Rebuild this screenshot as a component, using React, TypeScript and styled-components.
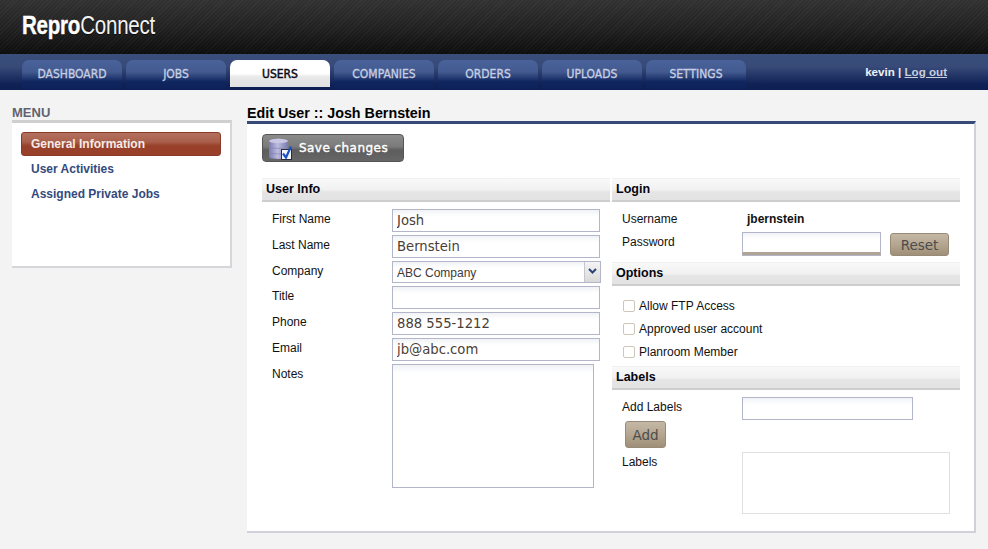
import React from "react";
import styled, { createGlobalStyle } from "styled-components";

const Global = createGlobalStyle`
  html, body { margin: 0; padding: 0; background: #f3f3f3; }
  body { font-family: "Liberation Sans", Arial, sans-serif; font-size: 12px; color: #111; overflow: hidden; }
  * { box-sizing: border-box; }
`;

const Page = styled.div`
  width: 988px;
  height: 549px;
  display: flex;
  flex-direction: column;
  overflow: hidden;
`;

const Header = styled.header`
  height: 54px;
  flex: none;
  padding: 11px 0 0 22px;
  background:
    repeating-linear-gradient(135deg, rgba(255,255,255,0.03) 0 1px, transparent 1px 3px),
    linear-gradient(#323232 0%, #222222 50%, #0d0d0d 100%);
`;

const Logo = styled.div`
  color: #fff;
  font-family: "Liberation Sans", Arial, sans-serif;
  font-size: 26px;
  line-height: 28px;
  letter-spacing: -0.3px;
  transform-origin: left center;
  transform: scaleX(0.79);
  text-shadow: 0 1px 1px rgba(0,0,0,0.6);
  b { font-weight: 700; -webkit-text-stroke: 0.4px #fff; }
  span { font-weight: 400; color: #f2f2f2; }
`;

const NavBar = styled.nav`
  height: 36px;
  flex: none;
  padding: 6px 41px 0 22px;
  display: flex;
  align-items: flex-start;
  gap: 4px;
  background: linear-gradient(#3a4e7c 0%, #374a78 35%, #0f2155 85%, #0e1f52 100%);
`;

const Tab = styled.a<{ $active?: boolean }>`
  width: 100px;
  height: ${(p) => (p.$active ? "27px" : "30px")};
  padding-top: 1px;
  display: block;
  text-align: center;
  border-radius: 7px 7px 0 0;
  font-family: "DejaVu Sans Condensed", "DejaVu Sans", sans-serif;
  font-size: 12px;
  line-height: 26px;
  font-weight: 400;
  color: ${(p) => (p.$active ? "#0a0a14" : "#c7cfe2")};
  -webkit-text-stroke: ${(p) => (p.$active ? "0.45px #0a0a14" : "0.3px #c7cfe2")};
  background: ${(p) =>
    p.$active
      ? "linear-gradient(#ffffff 0%, #ffffff 50%, #e9e9e9 62%, #e2e2e2 100%)"
      : "linear-gradient(#49639a 0%, #435a90 40%, #10265f 72%, #0d2159 100%)"};
`;

const Account = styled.div`
  margin-left: auto;
  line-height: 24px;
  font-size: 11.6px;
  font-weight: 700;
  color: #eef1f8;
  a { color: #c9cede; text-decoration: underline; }
`;

const Body = styled.div`
  flex: 1;
  display: flex;
  align-items: flex-start;
  padding: 14px 12px 0 12px;
  gap: 15px;
`;

const Side = styled.aside`
  width: 220px;
  flex: none;
`;

const SideTitle = styled.div`
  font-size: 13px;
  line-height: 18px;
  font-weight: 700;
  color: #636370;
  height: 16px;
`;

const SideBox = styled.div`
  height: 148px;
  background: #fff;
  border-top: 3px solid #cfcfcf;
  border-right: 2px solid #d6d6da;
  border-bottom: 2px solid #d6d6da;
  padding: 9px 9px 0 9px;
  display: flex;
  flex-direction: column;
  gap: 1px;
`;

const SideItem = styled.a<{ $active?: boolean }>`
  display: block;
  height: 24px;
  line-height: ${(p) => (p.$active ? "22px" : "24px")};
  padding-left: 10px;
  font-size: 12px;
  font-weight: 700;
  color: ${(p) => (p.$active ? "#f6ebe6" : "#344a7e")};
  border-radius: 3px;
  ${(p) =>
    p.$active
      ? `border: 1px solid #8a3a28; padding-left: 9px;
         background: linear-gradient(#b3705e 0%, #a9604c 40%, #98402a 58%, #98402a 100%);`
      : ""}
`;

const Main = styled.main`
  flex: 1;
  min-width: 0;
`;

const Title = styled.h1`
  margin: 0;
  font-size: 14.3px;
  line-height: 18px;
  height: 17px;
  font-weight: 700;
  color: #000;
`;

const Card = styled.div`
  height: 412px;
  background: #fff;
  border-top: 3px solid #364a78;
  border-right: 2px solid #d0d0d8;
  border-bottom: 2px solid #d0d0d8;
  padding: 10px 15px 0 15px;
`;

const SaveButton = styled.button`
  display: flex;
  align-items: center;
  width: 142px;
  height: 28px;
  padding: 0 0 0 4px;
  border: 1px solid #555;
  border-radius: 4px;
  background: linear-gradient(#8b8b8b 0%, #7a7a7a 45%, #5d5d5d 58%, #666 100%);
  color: #fff;
  font-family: "DejaVu Sans", sans-serif;
  font-size: 12px;
  font-weight: 400;
  letter-spacing: 0.45px;
  -webkit-text-stroke: 0.4px #fff;
  svg { flex: none; margin-right: 5px; }
`;

const Columns = styled.div`
  display: flex;
  margin-top: 16px;
  gap: 2px;
`;

const Left = styled.section`
  width: 348px;
  flex: none;
`;

const Right = styled.section`
  width: 348px;
  flex: none;
`;

const SectionHead = styled.div`
  height: 24px;
  padding-left: 4px;
  line-height: 21px;
  font-size: 12.5px;
  font-weight: 700;
  color: #050510;
  background: linear-gradient(#f9f9f9 0%, #f1f1f1 50%, #e5e5e5 62%, #e3e3e3 90%);
  border-top: 1px solid #f0f0f0;
  border-bottom: 2px solid #cdcdcd;
`;

const Fields = styled.div`
  padding: 7px 0 0 10px;
`;

const Row = styled.div<{ $h?: number }>`
  display: flex;
  align-items: flex-start;
  height: ${(p) => p.$h ?? 26}px;
`;

const Label = styled.label`
  width: 120px;
  flex: none;
  font-size: 12px;
  line-height: 14px;
  padding-top: 3px;
  color: #111;
`;

const TextInput = styled.input<{ $w?: number }>`
  display: block;
  width: ${(p) => p.$w ?? 208}px;
  height: 23px;
  padding: 0 4px;
  border: 1px solid #b3b6c9;
  border-radius: 0;
  outline: none;
  font-family: "DejaVu Sans", sans-serif;
  font-size: 13.2px;
  color: #4a4036;
  background: linear-gradient(#f0f2f5 0%, #ffffff 30%);
`;

const Select = styled.div`
  width: 209px;
  height: 22px;
  display: flex;
  border: 1px solid #b3b6c9;
  background: linear-gradient(#f0f2f5 0%, #ffffff 30%);
  font-size: 12px;
  line-height: 22px;
  padding-left: 4px;
  color: #3d3a38;
`;

const SelectText = styled.span`
  flex: 1;
`;

const SelectArrow = styled.span`
  width: 16px;
  display: flex;
  align-items: flex-start;
  justify-content: center;
  padding-top: 6px;
  border-left: 1px solid #c4c6d2;
  background: linear-gradient(#f4f4f4, #d9d9d9);
`;

const Notes = styled.textarea`
  display: block;
  width: 202px;
  height: 124px;
  border: 1px solid #b3b6c9;
  border-radius: 0;
  outline: none;
  resize: none;
  background: linear-gradient(#f0f2f5 0, #ffffff 8px);
`;

const TanButton = styled.button<{ $w: number }>`
  width: ${(p) => p.$w}px;
  height: 23px;
  padding: 0;
  border: 1px solid #978a76;
  border-radius: 3px;
  background: linear-gradient(#c4b8a6 0%, #b4a690 50%, #a08f78 100%);
  font-family: "DejaVu Sans", sans-serif;
  font-size: 13.5px;
  color: #4c4c4c;
`;

const ResetButton = styled(TanButton)`
  margin: 1px 0 0 9px;
`;

const AddWrap = styled.div`
  margin-left: 3px;
  height: 31px;
`;

const AddButton = styled(TanButton)`
  height: 27px;
`;

const Value = styled.span`
  font-weight: 700;
  font-size: 12px;
  line-height: 14px;
  padding: 3px 0 0 5px;
`;

const PasswordInput = styled(TextInput)`
  border-bottom: 3px solid #b0a494;
  box-shadow: 0 1px 0 #b3b6c9;
`;

const CheckList = styled.div`
  padding: 13px 0 0 11px;
  height: 80px;
  display: flex;
  flex-direction: column;
  gap: 9px;
`;

const CheckRow = styled.label`
  display: flex;
  align-items: center;
  height: 14px;
  gap: 4px;
  font-size: 12px;
`;

const CheckBox = styled.span`
  width: 12px;
  height: 12px;
  flex: none;
  border: 1px solid #cfc6b8;
  border-radius: 2px;
  background: #fff;
`;

const LabelsBox = styled.div`
  width: 208px;
  height: 62px;
  border: 1px solid #e0e0e0;
`;

const fieldsLeft = [
  ["First Name", "Josh"],
  ["Last Name", "Bernstein"],
];
const fieldsLeft2 = [
  ["Title", ""],
  ["Phone", "888 555-1212"],
  ["Email", "jb@abc.com"],
];

export default function App() {
  return (
    <Page>
      <Global />
      <Header>
        <Logo>
          <b>Repro</b>
          <span>Connect</span>
        </Logo>
      </Header>
      <NavBar>
        <Tab>DASHBOARD</Tab>
        <Tab>JOBS</Tab>
        <Tab $active>USERS</Tab>
        <Tab>COMPANIES</Tab>
        <Tab>ORDERS</Tab>
        <Tab>UPLOADS</Tab>
        <Tab>SETTINGS</Tab>
        <Account>
          kevin | <a>Log out</a>
        </Account>
      </NavBar>
      <Body>
        <Side>
          <SideTitle>MENU</SideTitle>
          <SideBox>
            <SideItem $active>General Information</SideItem>
            <SideItem>User Activities</SideItem>
            <SideItem>Assigned Private Jobs</SideItem>
          </SideBox>
        </Side>
        <Main>
          <Title>Edit User :: Josh Bernstein</Title>
          <Card>
            <SaveButton>
              <svg width="27" height="25" viewBox="0 0 27 25">
                <defs>
                  <linearGradient id="db" x1="0" x2="1" y1="0" y2="0">
                    <stop offset="0" stopColor="#7a7ab2" />
                    <stop offset="0.45" stopColor="#bcbce0" />
                    <stop offset="1" stopColor="#7a7aae" />
                  </linearGradient>
                </defs>
                <path d="M2 5c0-3 19-3 19 0v16c0 2.500-19 2.500-19 0z" fill="url(#db)" />
                <ellipse cx="11.500" cy="5" rx="9.500" ry="2.200" fill="#c8c8e4" />
                <path d="M2 10.500c0 2.500 19 2.500 19 0M2 16c0 2.500 19 2.500 19 0" fill="none" stroke="#8484ae" strokeWidth="0.7" />
                <rect x="14.500" y="13.500" width="10" height="10" fill="#f4f6fb" stroke="#2b2b3a" strokeWidth="1" />
                <path d="M16 17.500l3 4 5-11" fill="none" stroke="#1c52c8" strokeWidth="2.200" />
              </svg>
              Save changes
            </SaveButton>
            <Columns>
              <Left>
                <SectionHead>User Info</SectionHead>
                <Fields>
                  {fieldsLeft.map(([l, v]) => (
                    <Row key={l}>
                      <Label>{l}</Label>
                      <TextInput defaultValue={v} />
                    </Row>
                  ))}
                  <Row $h={25}>
                    <Label>Company</Label>
                    <Select>
                      <SelectText>ABC Company</SelectText>
                      <SelectArrow>
                        <svg width="9" height="6" viewBox="0 0 9 6">
                          <path d="M1 1l3.500 3.500L8 1" fill="none" stroke="#2c4478" strokeWidth="2" />
                        </svg>
                      </SelectArrow>
                    </Select>
                  </Row>
                  {fieldsLeft2.map(([l, v]) => (
                    <Row key={l}>
                      <Label>{l}</Label>
                      <TextInput defaultValue={v} />
                    </Row>
                  ))}
                  <Row>
                    <Label>Notes</Label>
                    <Notes />
                  </Row>
                </Fields>
              </Left>
              <Right>
                <SectionHead>Login</SectionHead>
                <Fields>
                  <Row $h={23}>
                    <Label>Username</Label>
                    <Value>jbernstein</Value>
                  </Row>
                  <Row $h={30}>
                    <Label>Password</Label>
                    <PasswordInput $w={139} />
                    <ResetButton $w={59}>Reset</ResetButton>
                  </Row>
                </Fields>
                <SectionHead>Options</SectionHead>
                <CheckList>
                  <CheckRow><CheckBox />Allow FTP Access</CheckRow>
                  <CheckRow><CheckBox />Approved user account</CheckRow>
                  <CheckRow><CheckBox />Planroom Member</CheckRow>
                </CheckList>
                <SectionHead>Labels</SectionHead>
                <Fields>
                  <Row $h={24}>
                    <Label>Add Labels</Label>
                    <TextInput $w={171} />
                  </Row>
                  <AddWrap>
                    <AddButton $w={41}>Add</AddButton>
                  </AddWrap>
                  <Row>
                    <Label>Labels</Label>
                    <LabelsBox />
                  </Row>
                </Fields>
              </Right>
            </Columns>
          </Card>
        </Main>
      </Body>
    </Page>
  );
}
